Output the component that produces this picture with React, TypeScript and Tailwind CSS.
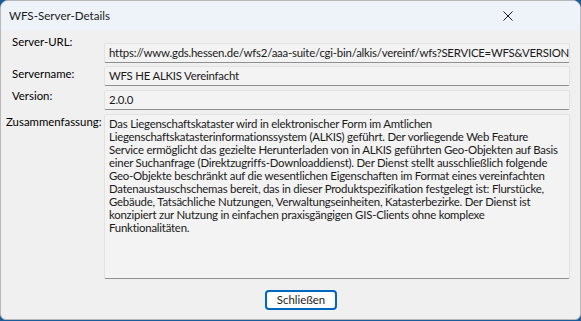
const summary = [
  'Das Liegenschaftskataster wird in elektronischer Form im Amtlichen',
  'Liegenschaftskatasterinformationssystem (ALKIS) geführt. Der vorliegende Web Feature',
  'Service ermöglicht das gezielte Herunterladen von in ALKIS geführten Geo-Objekten auf Basis',
  'einer Suchanfrage (Direktzugriffs-Downloaddienst). Der Dienst stellt ausschließlich folgende',
  'Geo-Objekte beschränkt auf die wesentlichen Eigenschaften im Format eines vereinfachten',
  'Datenaustauschschemas bereit, das in dieser Produktspezifikation festgelegt ist: Flurstücke,',
  'Gebäude, Tatsächliche Nutzungen, Verwaltungseinheiten, Katasterbezirke. Der Dienst ist',
  'konzipiert zur Nutzung in einfachen praxisgängigen GIS-Clients ohne komplexe',
  'Funktionalitäten.',
];

const Field = ({ children, className = '' }: { children?: React.ReactNode; className?: string }) => (
  <div
    className={`bg-[#f3f3f3] border border-[#e2e2e2] border-b-[#8f8f8f] rounded-[2px] px-[4px] text-[#1a1a1a] tracking-[-0.22px] whitespace-nowrap overflow-hidden ${className}`}
  >
    {children}
  </div>
);

export default function App() {
  return (
    <div className="w-[581px] h-[321px] bg-[#1d5c9b] font-['Lato'] text-[11.4px]">
      <div className="w-[581px] h-[320px] bg-[#f0f0f0] border border-[#b9b9b9] rounded-t-[8px] rounded-b-[6px] overflow-hidden flex flex-col">
        {/* title bar */}
        <div className="h-[30px] bg-[#eef3f9] flex items-center justify-between pl-[8px] pr-[67px] shrink-0">
          <span className="text-[11.6px] text-[#1b1b1b]">WFS-Server-Details</span>
          <svg width="10" height="10" viewBox="0 0 10 10" className="text-[#1b1b1b]">
            <path d="M0.5 0.5 L9.5 9.5 M9.5 0.5 L0.5 9.5" stroke="currentColor" strokeWidth="1" />
          </svg>
        </div>

        {/* body */}
        <div className="grid grid-cols-[103px_466px] pt-[12px] gap-y-[3px] leading-[16px]">
          <span className="pl-[11px] -mt-[9px]">Server-URL:</span>
          <Field className="h-[20px] leading-[18px]">
            https://www.gds.hessen.de/wfs2/aaa-suite/cgi-bin/alkis/vereinf/wfs?SERVICE=WFS&amp;VERSION
          </Field>

          <span className="pl-[11px] mt-[0px]">Servername:</span>
          <Field className="h-[20px] leading-[18px]">WFS HE ALKIS Vereinfacht</Field>

          <span className="pl-[11px] -mt-[1px]">Version:</span>
          <Field className="h-[20px] leading-[18px] mt-[1px]">2.0.0</Field>

          <span className="pl-[5px] mt-[1px]">Zusammenfassung:</span>
          <Field className="h-[165px] mt-[1px] pt-[2px] leading-[13px] whitespace-normal">
            {summary.map((l) => (
              <div key={l} className="whitespace-nowrap">{l}</div>
            ))}
          </Field>
        </div>

        <div className="flex justify-center pl-[21px] mt-[11px]">
          <button className="w-[72px] h-[20px] bg-white border-2 border-[#0067c0] rounded-[4px] text-[11.4px] text-[#1b1b1b] leading-none">
            Schließen
          </button>
        </div>
      </div>
    </div>
  );
}
